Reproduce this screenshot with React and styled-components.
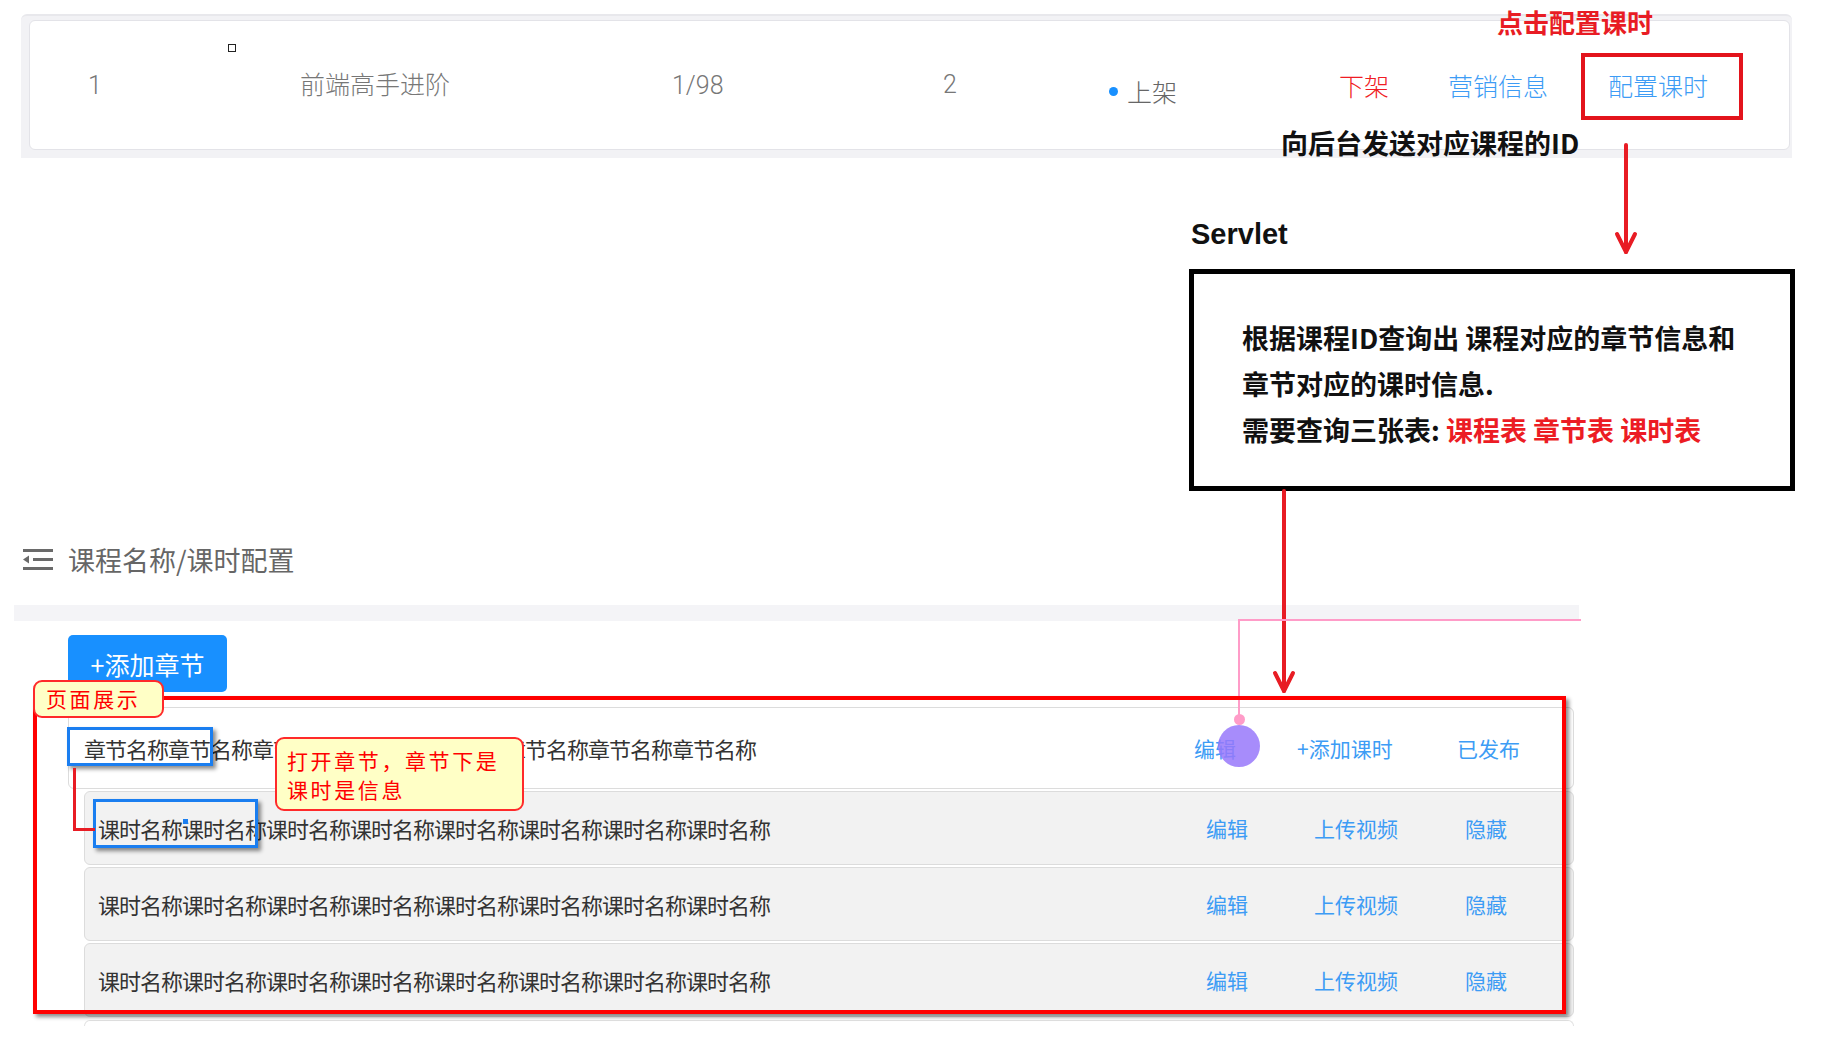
import React from 'react';
import styled, { createGlobalStyle } from 'styled-components';

const GlobalStyle = createGlobalStyle`
  html, body {
    margin: 0;
    padding: 0;
    background: #fff;
  }
  body {
    font-family: "Noto Sans CJK SC", "Noto Sans", sans-serif;
  }
`;

const Page = styled.div`
  position: relative;
  width: 1834px;
  height: 1050px;
  overflow: hidden;
  background: #fff;
`;

/* ---------- course row at the top ---------- */

const TopBand = styled.div`
  box-sizing: border-box;
  width: 1771px;
  margin: 14px 0 0 21px;
  padding: 4px 2px 8px 8px;
  background: #f2f2f5;
  border-top: 2px solid #e8e8ec;
  border-radius: 6px 6px 0 0;
`;

const CourseCard = styled.div`
  position: relative;
  box-sizing: border-box;
  height: 130px;
  display: grid;
  grid-template-columns: 212px 372px 271px 166px 230px 109px 160px 1fr;
  align-items: center;
  padding-left: 58px;
  background: #fff;
  border: 1px solid #e3e3e8;
  border-radius: 6px;
  font-family: Roboto, "Noto Sans CJK SC", sans-serif;
  font-weight: 300;
  font-size: 25px;
  color: #777;
`;

const Cell = styled.span`
  color: ${(p) => p.$color || '#777'};
  padding-top: ${(p) => p.$drop || 0}px;
  margin-top: ${(p) => p.$lift || 0}px;
  white-space: nowrap;
  display: flex;
  align-items: center;
`;

const StatusDot = styled.i`
  display: inline-block;
  width: 9px;
  height: 9px;
  margin-right: 9px;
  border-radius: 50%;
  background: #1890ff;
`;

const MissingGlyph = styled.span`
  position: absolute;
  left: 198px;
  top: 23px;
  width: 6px;
  height: 6px;
  border: 1.5px solid #222;
`;

/* ---------- servlet diagram ---------- */

const DiagramArea = styled.div`
  padding: 59px 0 0 1191px;
`;

const ServletLabel = styled.div`
  font-family: "Liberation Sans", Arial, sans-serif;
  font-weight: 700;
  font-size: 29px;
  line-height: 34px;
  color: #111;
`;

const ServletBox = styled.div`
  box-sizing: border-box;
  width: 606px;
  height: 222px;
  margin: 18px 0 0 -2px;
  padding: 41px 0 0 48px;
  border: 5px solid #000;
  font-size: 27px;
  font-weight: 700;
  line-height: 46px;
  color: #111;
`;

const Red = styled.span`
  color: #ec1c24;
`;

/* ---------- lesson configuration page ---------- */

const Heading = styled.div`
  display: flex;
  align-items: center;
  gap: 15px;
  height: 40px;
  margin-top: 48px;
  padding-left: 23px;
  font-size: 27px;
  color: #666;
`;

const GrayStrip = styled.div`
  width: 1565px;
  height: 16px;
  margin: 26px 0 0 14px;
  background: #f4f4f7;
`;

const Content = styled.div`
  padding-left: 68px;
`;

const AddButton = styled.button`
  display: block;
  width: 159px;
  height: 57px;
  margin-top: 14px;
  border: none;
  border-radius: 5px;
  background: #1890ff;
  color: #fff;
  font-family: "Noto Sans CJK SC", sans-serif;
  font-size: 25px;
`;

const ChapterList = styled.div`
  width: 1506px;
  margin-top: 15px;
`;

const Row = styled.div`
  box-sizing: border-box;
  height: ${(p) => p.$height}px;
  margin-left: ${(p) => (p.$lesson ? 16 : 0)}px;
  margin-top: ${(p) => (p.$lesson ? 2 : 0)}px;
  display: grid;
  grid-template-columns: 1fr ${(p) => p.$opsWidth}px;
  align-items: center;
  padding-left: ${(p) => (p.$lesson ? 13 : 15)}px;
  background: ${(p) => (p.$lesson ? '#f2f2f2' : '#fff')};
  border: 1px solid #dcdcdc;
  border-radius: 6px;
  font-size: 22px;
  letter-spacing: -1px;
  color: #333;
`;

const RowStub = styled.div`
  height: 5px;
  margin: 3px 0 0 16px;
  border: 1px solid #e2e2e2;
  border-bottom: none;
  border-radius: 6px 6px 0 0;
`;

const RowTitle = styled.span`
  white-space: nowrap;
  overflow: hidden;
`;

const Ops = styled.div`
  display: grid;
  grid-template-columns: ${(p) => p.$cols};
  font-size: 21px;
  letter-spacing: 0;
  color: #3d9cf5;
`;

/* ---------- annotation layer ---------- */

const Note = styled.div`
  position: absolute;
  left: ${(p) => p.$x}px;
  top: ${(p) => p.$y}px;
  font-size: ${(p) => p.$size}px;
  font-weight: 700;
  line-height: 1.2;
  color: ${(p) => p.$color};
  white-space: nowrap;
`;

const Frame = styled.div`
  position: absolute;
  box-sizing: border-box;
  left: ${(p) => p.$x}px;
  top: ${(p) => p.$y}px;
  width: ${(p) => p.$w}px;
  height: ${(p) => p.$h}px;
  border: ${(p) => p.$border}px solid ${(p) => p.$color};
  box-shadow: ${(p) => (p.$shadow ? '3px 3px 4px rgba(0, 0, 0, 0.45)' : 'none')};
`;

const Callout = styled.div`
  position: absolute;
  box-sizing: border-box;
  left: ${(p) => p.$x}px;
  top: ${(p) => p.$y}px;
  width: ${(p) => p.$w}px;
  height: ${(p) => p.$h}px;
  padding: ${(p) => p.$pad};
  background: #ffffc6;
  border: 2px solid #ff2a2a;
  border-radius: 9px;
  font-size: 21px;
  letter-spacing: 2.6px;
  line-height: 29px;
  color: #ff0000;
`;

const Connector = styled.div`
  position: absolute;
  left: 73px;
  top: 768px;
  width: 19px;
  height: 60px;
  border-left: 3px solid #e81c24;
  border-bottom: 3px solid #e81c24;
`;

const PinkLine = styled.div`
  position: absolute;
  left: 1238px;
  top: 619px;
  width: 341px;
  height: 101px;
  border-top: 2px solid #ff9cc8;
  border-left: 2px solid #ff9cc8;
`;

const PinkDot = styled.div`
  position: absolute;
  left: 1234px;
  top: 714px;
  width: 11px;
  height: 11px;
  border-radius: 50%;
  background: #ff9cc8;
`;

const Touch = styled.div`
  position: absolute;
  left: 1218px;
  top: 725px;
  width: 42px;
  height: 42px;
  border-radius: 50%;
  background: rgba(152, 120, 250, 0.85);
`;

const BlueSpeck = styled.div`
  position: absolute;
  left: 183px;
  top: 819px;
  width: 5px;
  height: 5px;
  background: #1a7ef0;
`;

const ArrowSvg = styled.svg`
  position: absolute;
  overflow: visible;
`;

function Arrow({ x, y1, y2 }) {
  const h = y2 - y1;
  return (
    <ArrowSvg width="24" height={h} style={{ left: x - 12, top: y1 }}>
      <line x1="12" y1="0" x2="12" y2={h - 1} stroke="#e81c24" strokeWidth="4" strokeLinecap="round" />
      <polyline
        points={`3,${h - 19} 12,${h - 1} 21,${h - 19}`}
        fill="none"
        stroke="#e81c24"
        strokeWidth="4"
        strokeLinecap="round"
        strokeLinejoin="round"
      />
    </ArrowSvg>
  );
}

function FoldIcon() {
  return (
    <svg width="30" height="21" viewBox="0 0 30 21">
      <rect x="0" y="0" width="30" height="3" fill="#6a6a6a" />
      <rect x="10" y="9" width="20" height="3" fill="#6a6a6a" />
      <polygon points="0,10.5 6,6.5 6,14.5" fill="#6a6a6a" />
      <rect x="0" y="18" width="30" height="3" fill="#6a6a6a" />
    </svg>
  );
}

const chapterName = '章节名称'.repeat(8);
const lessonName = '课时名称'.repeat(8);

export default function App() {
  return (
    <Page>
      <GlobalStyle />

      <TopBand>
        <CourseCard>
          <MissingGlyph />
          <Cell>1</Cell>
          <Cell $lift={-4}>前端高手进阶</Cell>
          <Cell>1/98</Cell>
          <Cell $lift={-2}>2</Cell>
          <Cell $color="#666" $drop={12}>
            <StatusDot />
            上架
          </Cell>
          <Cell $color="#f01c24">下架</Cell>
          <Cell $color="#3d9cf5">营销信息</Cell>
          <Cell $color="#3d9cf5">配置课时</Cell>
        </CourseCard>
      </TopBand>

      <DiagramArea>
        <ServletLabel>Servlet</ServletLabel>
        <ServletBox>
          <div>根据课程ID查询出 课程对应的章节信息和</div>
          <div>章节对应的课时信息.</div>
          <div>
            需要查询三张表: <Red>课程表 章节表 课时表</Red>
          </div>
        </ServletBox>
      </DiagramArea>

      <Heading>
        <FoldIcon />
        课程名称/课时配置
      </Heading>
      <GrayStrip />

      <Content>
        <AddButton>+添加章节</AddButton>
        <ChapterList>
          <Row $height={82} $opsWidth={379}>
            <RowTitle>{chapterName}</RowTitle>
            <Ops $cols="103px 160px 1fr">
              <span>编辑</span>
              <span>+添加课时</span>
              <span>已发布</span>
            </Ops>
          </Row>
          {[0, 1, 2].map((i) => (
            <Row key={i} $lesson $height={74} $opsWidth={367}>
              <RowTitle>{lessonName}</RowTitle>
              <Ops $cols="108px 151px 1fr">
                <span>编辑</span>
                <span>上传视频</span>
                <span>隐藏</span>
              </Ops>
            </Row>
          ))}
          <RowStub />
        </ChapterList>
      </Content>

      {/* annotations drawn over the screenshot */}
      <Note $x={1497} $y={6} $size={26} $color="#e81c24">点击配置课时</Note>
      <Frame $x={1581} $y={53} $w={162} $h={67} $border={4} $color="#e3141c" />
      <Note $x={1281} $y={127} $size={27} $color="#111">向后台发送对应课程的ID</Note>
      <Arrow x={1626} y1={145} y2={253} />
      <Arrow x={1284} y1={491} y2={692} />

      <PinkLine />
      <PinkDot />

      <Frame $x={33} $y={696} $w={1533} $h={318} $border={4} $color="#ff0000" $shadow />
      <Frame $x={67} $y={727} $w={146} $h={39} $border={3} $color="#1a7ef0" $shadow />
      <Frame $x={93} $y={799} $w={165} $h={49} $border={3} $color="#1a7ef0" $shadow />
      <Connector />
      <BlueSpeck />

      <Callout $x={33} $y={680} $w={131} $h={38} $pad="2px 0 0 11px">页面展示</Callout>
      <Callout $x={275} $y={737} $w={249} $h={74} $pad="7px 0 0 10px">
        打开章节，章节下是
        <br />
        课时是信息
      </Callout>

      <Touch />
    </Page>
  );
}
